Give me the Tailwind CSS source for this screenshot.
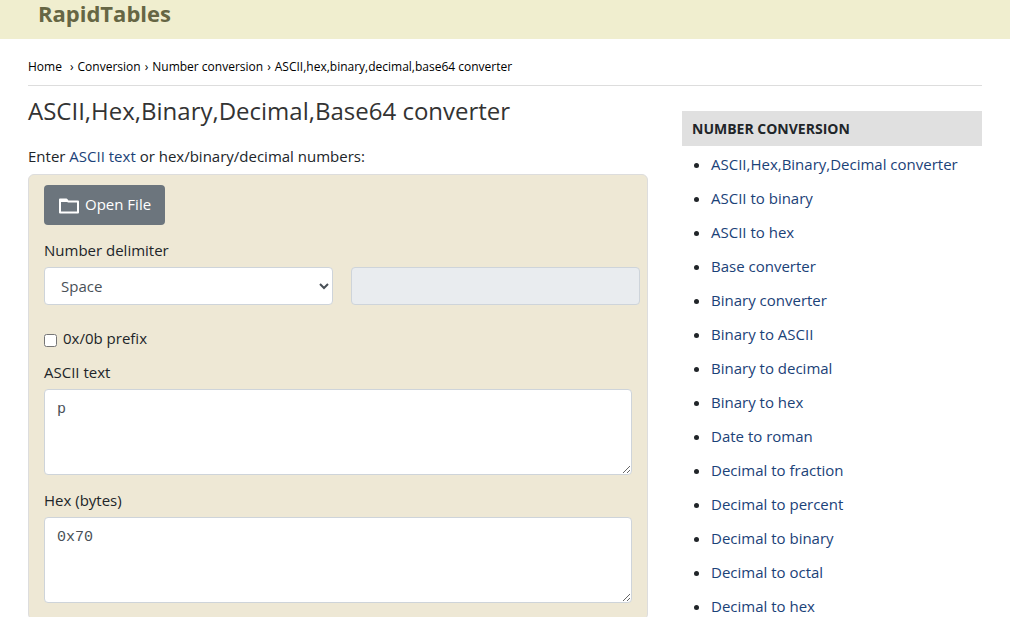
<!DOCTYPE html>
<html lang="en">
<head>
<meta charset="utf-8">
<meta name="viewport" content="width=device-width, initial-scale=1">
<title>ASCII,Hex,Binary,Decimal,Base64 converter</title>
<script src="https://cdn.jsdelivr.net/npm/@tailwindcss/browser@4"></script>
</head>
<body class="h-screen overflow-hidden bg-white font-['Open_Sans','Noto_Sans',sans-serif] text-[15px] leading-6 text-[#212529]">
<header class="h-[39px] bg-[#f0eecf] px-[38px]">
  <a href="#" class="inline-block text-[22px] leading-[26px] font-bold text-[#666644]">RapidTables</a>
</header>
<div class="px-7">
  <nav aria-label="Breadcrumb" class="flex gap-1 border-b border-[#dddddd] pt-[18px] pb-2 text-xs leading-5 text-black">
    <a href="#" class="mr-1">Home</a><span>›</span>
    <a href="#">Conversion</a><span>›</span>
    <a href="#">Number conversion</a><span>›</span>
    <span>ASCII,hex,binary,decimal,base64 converter</span>
  </nav>
  <div class="flex items-start gap-[34px]">
    <main class="min-w-0 flex-1">
      <h1 class="mt-[7px] text-2xl leading-9 text-[#333333]">ASCII,Hex,Binary,Decimal,Base64 converter</h1>
      <p class="mt-[15px]">Enter <a href="#" class="text-[#1b4278]">ASCII text</a> or hex/binary/decimal numbers:</p>
      <form class="mt-[6px] rounded-md border border-[#dddddd] bg-[#eee8d5] pt-[10px] pb-4 pl-[15px]">
        <button type="button" class="flex h-10 items-center gap-[5px] rounded bg-[#6c757d] px-[14px] pb-[2px] text-white">
          <svg class="mt-1 h-[18px] w-[22px]" viewBox="0 0 22 18" fill="none" aria-hidden="true"><path d="M2 3.5V15.5H20V4.5H10L8.5 2.5H2Z" stroke="currentColor" stroke-width="2" stroke-linejoin="round"/><path d="M2 2H8.5L10.5 5H2Z" fill="currentColor"/></svg>
          Open File
        </button>
        <label for="delimiter" class="mt-[13px] block">Number delimiter</label>
        <div class="mt-[5px] grid grid-cols-2 gap-[18px] pr-[7px]">
          <select id="delimiter" class="h-[38px] w-full rounded border border-[#ced4da] bg-white px-3 text-[#495057]"><option>Space</option><option>Comma</option><option>User defined</option></select>
          <input type="text" aria-label="Custom delimiter" disabled class="h-[38px] w-full rounded border border-[#ced4da] bg-[#e9ecef] px-3">
        </div>
        <div class="mt-[21px] flex items-center gap-[6px]">
          <input id="prefix" type="checkbox" class="mt-1 size-[13px]">
          <label for="prefix">0x/0b prefix</label>
        </div>
        <div class="pr-[15px]">
          <label for="ascii" class="mt-[10px] block">ASCII text</label>
          <textarea id="ascii" class="mt-[5px] block h-[86px] w-full resize rounded border border-[#ced4da] bg-white px-3 py-2 font-['Liberation_Mono',monospace] text-[#495057]">p</textarea>
          <label for="hex" class="mt-[13px] block">Hex (bytes)</label>
          <textarea id="hex" class="mt-[5px] block h-[86px] w-full resize rounded border border-[#ced4da] bg-white px-3 py-2 font-['Liberation_Mono',monospace] text-[#495057]">0x70</textarea>
        </div>
      </form>
    </main>
    <aside class="mt-[25px] w-[300px] shrink-0">
      <h2 class="bg-[#e0e0e0] px-[10px] text-sm leading-[35px] font-bold">NUMBER CONVERSION</h2>
      <ul class="mt-px list-disc pl-[29px] leading-[34px] text-[#212529]">
        <li><a href="#" class="text-[#1b4278]">ASCII,Hex,Binary,Decimal converter</a></li>
        <li><a href="#" class="text-[#1b4278]">ASCII to binary</a></li>
        <li><a href="#" class="text-[#1b4278]">ASCII to hex</a></li>
        <li><a href="#" class="text-[#1b4278]">Base converter</a></li>
        <li><a href="#" class="text-[#1b4278]">Binary converter</a></li>
        <li><a href="#" class="text-[#1b4278]">Binary to ASCII</a></li>
        <li><a href="#" class="text-[#1b4278]">Binary to decimal</a></li>
        <li><a href="#" class="text-[#1b4278]">Binary to hex</a></li>
        <li><a href="#" class="text-[#1b4278]">Date to roman</a></li>
        <li><a href="#" class="text-[#1b4278]">Decimal to fraction</a></li>
        <li><a href="#" class="text-[#1b4278]">Decimal to percent</a></li>
        <li><a href="#" class="text-[#1b4278]">Decimal to binary</a></li>
        <li><a href="#" class="text-[#1b4278]">Decimal to octal</a></li>
        <li><a href="#" class="text-[#1b4278]">Decimal to hex</a></li>
      </ul>
    </aside>
  </div>
</div>
</body>
</html>
